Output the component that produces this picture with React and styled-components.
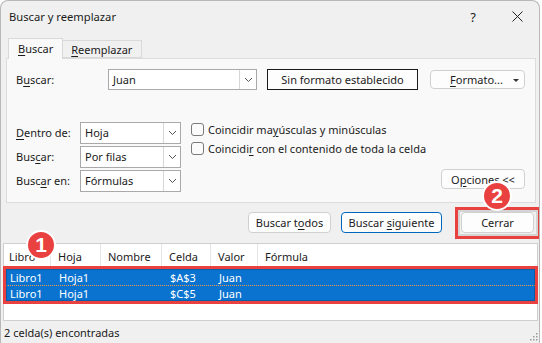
import React from 'react'
import styled, { createGlobalStyle } from 'styled-components'

const Global = createGlobalStyle`
  body {
    margin: 0;
    background: #ffffff;
    font-family: "Noto Sans", "Open Sans", sans-serif;
    font-size: 11px;
    color: #1b1b1b;
  }
  * { box-sizing: border-box; }
  u { text-underline-offset: 2px; }
`

const Window = styled.div`
  position: relative;
  width: 540px;
  height: 343px;
  background: #f0f0f0;
  border: 1px solid #b8b8b8;
  border-bottom: none;
  border-radius: 8px 8px 0 0;
  display: flex;
  flex-direction: column;
  overflow: hidden;
`

const TitleBar = styled.div`
  height: 31px;
  display: flex;
  align-items: center;
  padding-left: 8px;
  font-size: 11.2px;
`

const Title = styled.div`
  flex: 1;
`

const TitleButton = styled.div`
  width: 44px;
  height: 31px;
  display: flex;
  align-items: center;
  justify-content: center;
  font-size: 13px;
`

const Tabs = styled.div`
  display: flex;
  align-items: flex-end;
  height: 20px;
  margin: 6px 0 0 7px;
`

const Tab = styled.div`
  position: relative;
  z-index: ${p => (p.$active ? 1 : 0)};
  height: ${p => (p.$active ? '21px' : '18px')};
  margin-bottom: ${p => (p.$active ? '-1px' : '0')};
  padding: ${p => (p.$active ? '2px 9px 0 9px' : '1px 9px 0 8px')};
  background: ${p => (p.$active ? '#f9f9f9' : '#f0f0f0')};
  border: 1px solid #d9d9d9;
  border-bottom: ${p => (p.$active ? 'none' : '1px solid #d9d9d9')};
  border-left: ${p => (p.$active ? '1px solid #d9d9d9' : 'none')};
`

const Panel = styled.div`
  height: 145px;
  margin: 0 3px 0 5px;
  background: #f9f9f9;
  border: 1px solid #dcdcdc;
  padding: 10px 10px 0 9px;
`

const Row = styled.div`
  display: flex;
  align-items: center;
  height: 21px;
`

const Label = styled.div`
  width: ${p => p.$w}px;
  flex-shrink: 0;
`

const Combo = styled.div`
  width: ${p => p.$w}px;
  height: ${p => p.$h}px;
  background: #ffffff;
  border: 1px solid #a9a9a9;
  display: flex;
  align-items: center;
`

const ComboText = styled.div`
  flex: 1;
  padding-left: 4px;
`

const ComboArrow = styled.div`
  width: 17px;
  height: 100%;
  border-left: 1px solid #d6d6d6;
  display: flex;
  align-items: center;
  justify-content: center;
`

const Button = styled.div`
  width: ${p => p.$w}px;
  height: ${p => p.$h || 21}px;
  flex-shrink: 0;
  background: #fdfdfd;
  border: 1px solid ${p => p.$border || '#d0d0d0'};
  border-radius: ${p => (p.$square ? '0' : '4px')};
  display: flex;
  align-items: center;
  justify-content: center;
  position: relative;
  white-space: pre;
`

const Caret = styled.span`
  position: absolute;
  right: 5px;
  top: 8px;
  width: 0;
  height: 0;
  border-left: 3px solid transparent;
  border-right: 3px solid transparent;
  border-top: 3px solid #333;
`

const Lower = styled.div`
  display: flex;
  margin-top: 32px;
`

const SelectColumn = styled.div`
  display: flex;
  flex-direction: column;
  gap: 3px;
`

const CheckColumn = styled.div`
  display: flex;
  flex-direction: column;
  gap: 6px;
  margin-left: 10px;
  padding-top: 1px;
`

const Check = styled.div`
  display: flex;
  align-items: center;
  height: 13px;
  gap: 4px;
`

const Box = styled.span`
  width: 13px;
  height: 13px;
  border: 1px solid #7a7a7a;
  border-radius: 3px;
  background: #fbfbfb;
`

const OptionsSlot = styled.div`
  margin-left: auto;
  align-self: flex-end;
  margin-bottom: 2px;
`

const ActionRow = styled.div`
  display: flex;
  justify-content: flex-end;
  align-items: center;
  margin-top: 9px;
  padding-right: 5px;
`

const Highlight = styled.div`
  position: relative;
  margin-left: 19px;

  &::after {
    content: '';
    position: absolute;
    left: -6px;
    right: -7px;
    top: -5px;
    bottom: -6px;
    border: 3px solid #e8413f;
    box-shadow: inset 0 0 0 2px #d4d4d4;
    pointer-events: none;
  }
`

const List = styled.div`
  margin: 10px 1px 0 2px;
  height: 78px;
  background: #ffffff;
  border: 1px solid #cfcfcf;
`

const HeaderRow = styled.div`
  display: flex;
  height: 22px;
  align-items: center;
`

const HeadCell = styled.div`
  width: ${p => (p.$w ? `${p.$w}px` : 'auto')};
  flex: ${p => (p.$w ? 'none' : '1')};
  height: 100%;
  padding: 2px 0 0 ${p => p.$pad}px;
  display: flex;
  align-items: center;
  border-right: ${p => (p.$w ? '1px solid #e5e5e5' : 'none')};
`

const Selection = styled.div`
  margin: 0 -1px;
  border: 3px solid #e8413f;
`

const ResultRow = styled.div`
  display: flex;
  height: 16px;
  align-items: center;
  background: #0a73cf;
  color: #ffffff;
  border-left: 1px solid #0a5ea8;
  border-right: 1px solid #0a5ea8;
  border-top: ${p => (p.$second ? '1px dotted #f19a45' : '1px solid #0a5ea8')};
  border-bottom: ${p => (p.$second ? '1px solid #0a5ea8' : 'none')};
`

const Cell = styled.div`
  width: ${p => p.$w}px;
  flex-shrink: 0;
  padding-left: ${p => p.$pad}px;
`

const Status = styled.div`
  flex: 1;
  display: flex;
  align-items: center;
  padding-left: 3px;
`

const Badge = styled.div`
  position: absolute;
  left: ${p => p.$x}px;
  top: ${p => p.$y}px;
  width: 30px;
  height: 30px;
  border-radius: 50%;
  background: #e8413f;
  border: 2px solid #ffffff;
  color: #ffffff;
  font-family: "Liberation Sans", Arial, sans-serif;
  font-weight: bold;
  font-size: 21px;
  display: flex;
  align-items: center;
  justify-content: center;
`

const Grip = styled.svg`
  position: absolute;
  right: 1px;
  bottom: 2px;
`

const Chevron = () => (
  <svg width="9" height="6" viewBox="0 0 9 6">
    <polyline points="1,1 4.5,4.5 8,1" fill="none" stroke="#555" strokeWidth="1" />
  </svg>
)

const Select = ({ w, h, value }) => (
  <Combo $w={w} $h={h}>
    <ComboText>{value}</ComboText>
    <ComboArrow>
      <Chevron />
    </ComboArrow>
  </Combo>
)

const columns = [
  { w: 47, pad: 5 },
  { w: 50, pad: 7 },
  { w: 61, pad: 7 },
  { w: 49, pad: 7 },
  { w: 47, pad: 7 },
]

const results = [
  ['Libro1', 'Hoja1', '', '$A$3', 'Juan'],
  ['Libro1', 'Hoja1', '', '$C$5', 'Juan'],
]

export default function App() {
  return (
    <>
      <Global />
      <Window>
        <TitleBar>
          <Title>Buscar y reemplazar</Title>
          <TitleButton>?</TitleButton>
          <TitleButton>
            <svg width="11" height="11" viewBox="0 0 11 11">
              <path d="M0.5 0.5 L10.5 10.5 M10.5 0.5 L0.5 10.5" stroke="#222" strokeWidth="1" />
            </svg>
          </TitleButton>
        </TitleBar>

        <Tabs>
          <Tab $active><u>B</u>uscar</Tab>
          <Tab><u>R</u>eemplazar</Tab>
        </Tabs>

        <Panel>
          <Row>
            <Label $w={92}>B<u>u</u>scar:</Label>
            <Select w={149} h={21} value="Juan" />
            <Button $w={151} $square $border="#1a1a1a" style={{ marginLeft: 10 }}>
              <span>Sin formato establecido</span>
            </Button>
            <Button $w={95} $h={19} style={{ marginLeft: 'auto' }}>
              <span style={{ marginLeft: -2 }}><u>F</u>ormato...</span>
              <Caret />
            </Button>
          </Row>

          <Lower>
            <SelectColumn>
              <Row>
                <Label $w={64}><u>D</u>entro de:</Label>
                <Select w={101} h={22} value="Hoja" />
              </Row>
              <Row>
                <Label $w={64}>Bus<u>c</u>ar:</Label>
                <Select w={101} h={22} value="Por filas" />
              </Row>
              <Row>
                <Label $w={64}>Busc<u>a</u>r en:</Label>
                <Select w={101} h={22} value="Fórmulas" />
              </Row>
            </SelectColumn>
            <CheckColumn>
              <Check>
                <Box />
                <span>Coincidir ma<u>y</u>úsculas y minúsculas</span>
              </Check>
              <Check>
                <Box />
                <span>Coincidi<u>r</u> con el contenido de toda la celda</span>
              </Check>
            </CheckColumn>
            <OptionsSlot>
              <Button $w={84} $h={20}><span>O<u>p</u>ciones &lt;&lt;</span></Button>
            </OptionsSlot>
          </Lower>
        </Panel>

        <ActionRow>
          <Button $w={83}><span>Buscar t<u>o</u>dos</span></Button>
          <Button $w={101} $border="#0067c0" style={{ marginLeft: 10 }}>
            <span>Buscar <u>s</u>iguiente</span>
          </Button>
          <Highlight>
            <Button $w={73}><span>Cerrar</span></Button>
          </Highlight>
        </ActionRow>

        <List>
          <HeaderRow>
            {['Libro', 'Hoja', 'Nombre', 'Celda', 'Valor'].map((h, i) => (
              <HeadCell key={h} $w={columns[i].w} $pad={columns[i].pad}>{h}</HeadCell>
            ))}
            <HeadCell $pad={7}>Fórmula</HeadCell>
          </HeaderRow>
          <Selection>
            {results.map((r, idx) => (
              <ResultRow key={idx} $second={idx === 1}>
                {r.map((v, i) => (
                  <Cell key={i} $w={columns[i].w} $pad={columns[i].pad - 2}>{v}</Cell>
                ))}
              </ResultRow>
            ))}
          </Selection>
        </List>

        <Status>2 celda(s) encontradas</Status>

        <Badge $x={25} $y={229}>1</Badge>
        <Badge $x={481} $y={180}>2</Badge>

        <Grip width="8" height="8" viewBox="0 0 8 8">
          {[[6, 0], [3, 3], [6, 3], [0, 6], [3, 6], [6, 6]].map(([x, y]) => (
            <rect key={`${x}-${y}`} x={x} y={y} width="1.5" height="1.5" fill="#9a9a9a" />
          ))}
        </Grip>
      </Window>
    </>
  )
}
